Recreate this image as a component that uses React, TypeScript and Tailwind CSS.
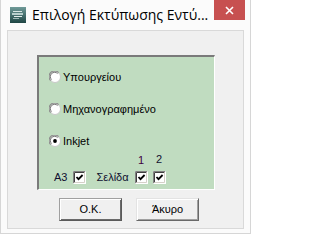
import React from "react";

const font = { fontFamily: '"Liberation Sans", Arial, sans-serif' };

function Radio({ checked }: { checked?: boolean }) {
  return (
    <svg width="12" height="12" viewBox="0 0 12 12" className="shrink-0">
      <circle cx="6" cy="6" r="5.5" fill="#fff" stroke="#c8c8c8" />
      <path d="M1.6 9.6 A5.2 5.2 0 0 1 9.6 1.6" fill="none" stroke="#8a8a8a" strokeWidth="1.1" />
      <path d="M2.6 8.6 A4 4 0 0 1 8.6 2.6" fill="none" stroke="#5a5a5a" strokeWidth="0.8" />
      {checked && <circle cx="6" cy="6" r="1.9" fill="#000" />}
    </svg>
  );
}

function Check() {
  return (
    <svg width="13" height="13" viewBox="0 0 13 13" className="shrink-0">
      <rect x="0" y="0" width="13" height="13" fill="#fff" />
      <path d="M0.5 12.5 V0.5 H12.5" fill="none" stroke="#808080" />
      <path d="M1.5 11.5 V1.5 H11.5" fill="none" stroke="#404040" />
      <path d="M12.5 0.5 V12.5 H0.5" fill="none" stroke="#fff" />
      <path d="M11.5 1.5 V11.5 H1.5" fill="none" stroke="#d4d0c8" />
      <path d="M3.5 6 L5.5 8.2 L9.6 4" fill="none" stroke="#000" strokeWidth="1.8" />
    </svg>
  );
}

export default function App() {
  return (
    <div className="w-[251px] h-[234px] bg-[#fbfbfb] border-x border-b border-[#d6d6d6]" style={font}>
      {/* Title bar */}
      <div className="h-[30px] flex items-start">
        <svg width="16" height="16" viewBox="0 0 16 16" className="ml-[9px] mt-[7px] shrink-0">
          <defs>
            <linearGradient id="ic" x1="0" y1="0" x2="0" y2="1">
              <stop offset="0" stopColor="#6f9a98" />
              <stop offset="1" stopColor="#1f4644" />
            </linearGradient>
          </defs>
          <rect width="16" height="16" fill="url(#ic)" />
          <rect x="3" y="4" width="9" height="1" fill="#d8e6e4" />
          <rect x="2" y="6" width="11" height="2" fill="#b8cfcc" />
          <rect x="4" y="9" width="8" height="1" fill="#e2ecea" />
          <rect x="3" y="11" width="6" height="1" fill="#9fbab7" />
        </svg>
        <span className="ml-[6px] mt-[5px] text-[14px] leading-[20px] text-black whitespace-nowrap" style={{ fontFamily: '"Open Sans", "Noto Sans", sans-serif' }}>
          Επιλογή Εκτύπωσης Εντύ...
        </span>
        <div className="ml-auto mr-[5px] w-[31px] h-[20px] shrink-0 bg-[#c75050] flex items-center justify-center">
          <svg width="9" height="9" viewBox="0 0 9 9">
            <path d="M1 1 L8 8 M8 1 L1 8" stroke="#fff" strokeWidth="1.6" />
          </svg>
        </div>
      </div>

      {/* Client area */}
      <div className="ml-[6px] w-[237px] h-[199px] bg-[#f0f0f0] border border-[#d9d9d9]">
        <div className="ml-[29px] mt-[24px] w-[178px] h-[135px] bg-[#c0dcc0] border-t-2 border-l-2 border-t-[#7a7a7a] border-l-[#7a7a7a] border-r border-b border-r-white border-b-white">
          <div className="flex flex-col gap-[20px] ml-[10px] mt-[14px] text-[11px] text-black">
            <div className="flex items-center h-[12px] gap-[2px]">
              <Radio />
              <span>Υπουργείου</span>
            </div>
            <div className="flex items-center h-[12px] gap-[2px]">
              <Radio />
              <span>Μηχανογραφημένο</span>
            </div>
            <div className="flex items-center h-[12px] gap-[2px]">
              <Radio checked />
              <span>Inkjet</span>
            </div>
          </div>

          <div className="flex items-end ml-[15px] mt-[6px] text-[11px] text-[#101030]">
            <span className="h-[13px] leading-[13px]">A3</span>
            <span className="ml-[6px]"><Check /></span>
            <span className="ml-[10px] h-[13px] leading-[13px]">Σελίδα</span>
            <div className="ml-[6px] flex flex-col items-center">
              <span className="leading-[13px] mb-[4px] text-[#400040]">1</span>
              <Check />
            </div>
            <div className="ml-[5px] flex flex-col items-center">
              <span className="leading-[13px] mb-[5px]">2</span>
              <Check />
            </div>
          </div>
        </div>

        <div className="flex ml-[51px] mt-[8px] text-[11px] text-black">
          <button className="w-[63px] h-[23px] bg-[#f0f0f0] border border-[#a0a0a0] border-r-[#5a5a5a] border-b-[#5a5a5a] shadow-[inset_1px_1px_#fff,inset_-1px_-1px_#6a6a6a] flex items-center justify-center">
            O.K.
          </button>
          <button className="ml-[14px] w-[63px] h-[23px] bg-[#f0f0f0] border border-[#e3e3e3] border-r-[#696969] border-b-[#696969] shadow-[inset_1px_1px_#fff,inset_-1px_-1px_#a0a0a0] flex items-center justify-center">
            Άκυρο
          </button>
        </div>
      </div>
    </div>
  );
}
